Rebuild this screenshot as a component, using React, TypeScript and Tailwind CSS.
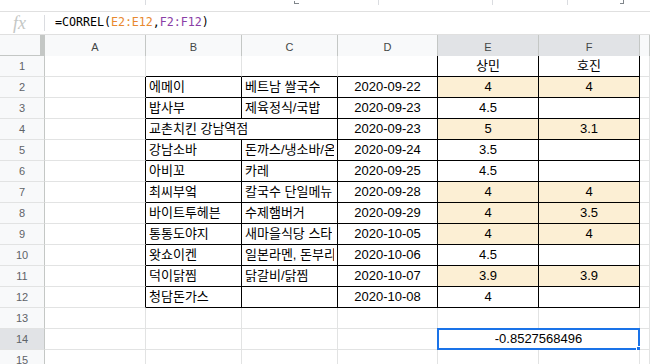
import React from 'react';

type Cell = { text?: string; span?: number; center?: boolean; hl?: boolean; select?: boolean };

const COLS = ['A', 'B', 'C', 'D', 'E', 'F', ''];

const data: [string, string, string, string, string][] = [
  ['에메이', '베트남 쌀국수', '2020-09-22', '4', '4'],
  ['밥사부', '제육정식/국밥', '2020-09-23', '4.5', ''],
  ['교촌치킨 강남역점', '', '2020-09-23', '5', '3.1'],
  ['강남소바', '돈까스/냉소바/온', '2020-09-24', '3.5', ''],
  ['아비꼬', '카레', '2020-09-25', '4.5', ''],
  ['최씨부엌', '칼국수 단일메뉴', '2020-09-28', '4', '4'],
  ['바이트투헤븐', '수제햄버거', '2020-09-29', '4', '3.5'],
  ['통통도야지', '새마을식당 스타', '2020-10-05', '4', '4'],
  ['왓쇼이켄', '일본라멘, 돈부리', '2020-10-06', '4.5', ''],
  ['덕이닭찜', '닭갈비/닭찜', '2020-10-07', '3.9', '3.9'],
  ['청담돈가스', '', '2020-10-08', '4', ''],
];

function buildRow(r: number): Cell[] {
  if (r === 1) return [{}, {}, {}, {}, { text: '상민', center: true }, { text: '호진', center: true }, {}];
  if (r >= 2 && r <= 12) {
    const [b, c, d, e, f] = data[r - 2];
    const hl = e !== '' && f !== '';
    const bc: Cell[] = r === 4 ? [{ text: b, span: 2 }] : [{ text: b }, { text: c }];
    return [{}, ...bc, { text: d, center: true }, { text: e, center: true, hl }, { text: f, center: true, hl }, {}];
  }
  if (r === 14) return [{}, {}, {}, {}, { text: '-0.8527568496', center: true, span: 2, select: true }, {}];
  return [{}, {}, {}, {}, {}, {}, {}];
}

export default function App() {
  const rows = Array.from({ length: 15 }, (_, i) => i + 1);

  return (
    <div className="w-[650px] h-[364px] overflow-hidden bg-white font-['Liberation_Sans','Noto_Sans_CJK_KR',sans-serif] text-black">
      {/* toolbar remnant */}
      <div className="flex h-[12px] border-b border-[#e0e0e0]">
        <div className="ml-[145px] h-[5px] w-px bg-[#dadce0]" />
        <div className="ml-[148px] mt-[1px] h-[3px] w-[5px] border-b border-l border-[#80868b]" />
        <div className="ml-[79px] h-[5px] w-px bg-[#dadce0]" />
        <div className="ml-[113px] h-[5px] w-px bg-[#dadce0]" />
        <div className="ml-[74px] h-[5px] w-px bg-[#dadce0]" />
        <div className="ml-[52px] h-[4px] w-[4px] border-b border-r border-[#80868b]" />
      </div>

      {/* formula bar */}
      <div className="flex h-[23px] items-center border-b border-[#e0e0e0]">
        <div className="w-[44px] pl-[13px] font-['Liberation_Serif',serif] text-[18px] italic leading-none text-[#c4c7c5]">
          fx
        </div>
        <div className="h-[16px] w-px bg-[#dadce0]" />
        <div className="pl-[10px] font-['DejaVu_Sans_Mono',monospace] text-[11.7px] tracking-[-0.05px]">
          =CORREL(<span className="text-[#e8892f]">E2:E12</span>,<span className="text-[#8a3ea6]">F2:F12</span>)
        </div>
      </div>

      {/* sheet grid */}
      <div className="grid grid-cols-[45px_101px_96px_96px_100px_101px_101px_1fr] auto-rows-[21px]">
        <div className="h-[25px] border-b-[5px] border-r-[5px] border-[#c4c7c5] bg-[#f8f9fa]" />
        {COLS.map((c, i) => (
          <div
            key={c + i}
            className={
              'flex h-[25px] items-center justify-center border-b border-r border-[#c4c7c5] text-[11px] text-[#444746] ' +
              (c === 'E' || c === 'F' ? 'bg-[#e1e3e6]' : 'bg-[#f8f9fa]')
            }
          >
            {c}
          </div>
        ))}

        {rows.map((r) => {
          const cells = buildRow(r);
          let col = 0;
          return (
            <React.Fragment key={r}>
              <div
                className={
                  'flex items-center justify-center border-b border-r border-b-[#e2e3e3] border-r-[#c4c7c5] text-[11px] text-[#5f6368] ' +
                  (r === 14 ? 'bg-[#e1e3e6]' : 'bg-[#f8f9fa]')
                }
              >
                {r}
              </div>
              {cells.map((cell, i) => {
                const start = col;
                const span = cell.span ?? 1;
                col += span;
                const end = col - 1; // 0=A ... 5=F
                const blackR = (r >= 2 && r <= 12 && end <= 5) || (r === 1 && end >= 3 && end <= 5);
                const blackB = r <= 12 && start >= 1 && end <= 5;
                return (
                  <div
                    key={i}
                    className={
                      'relative flex items-center whitespace-nowrap border-b border-r px-[3px] text-[13px] ' +
                      (span === 2 ? 'col-span-2 ' : '') +
                      (blackR ? 'border-r-black ' : 'border-r-[#e2e3e3] ') +
                      (blackB ? 'border-b-black ' : 'border-b-[#e2e3e3] ') +
                      (cell.center ? 'justify-center ' : 'justify-start ') +
                      (cell.hl ? 'bg-[#fcefd4]' : 'bg-white')
                    }
                  >
                    <span className="overflow-hidden">{cell.text}</span>
                    {cell.select && (
                      <div className="absolute -inset-px border-2 border-[#1a73e8]">
                        <div className="absolute -bottom-[5px] -right-[5px] h-[7px] w-[7px] border border-white bg-[#1a73e8]" />
                      </div>
                    )}
                  </div>
                );
              })}
            </React.Fragment>
          );
        })}
      </div>
    </div>
  );
}
